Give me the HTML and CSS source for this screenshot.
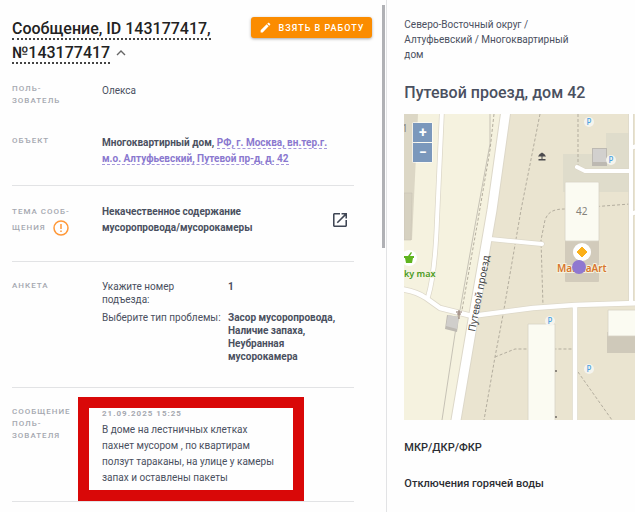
FILE: index.html
```html
<!DOCTYPE html>
<html lang="ru">
<head>
  <meta charset="UTF-8">
  <meta name="viewport" content="width=device-width, initial-scale=1.0">
  <title>Сообщение 143177417</title>
  <link rel="stylesheet" href="styles.css">
</head>
<body>
  <main class="message">
    <div class="scrollbar"></div>
    <header class="message-header">
      <h1><span class="dotted">Сообщение, ID 143177417,</span> <span class="dotted">№143177417</span>
        <svg class="caret" viewBox="0 0 10 6"><path d="M1 5l4-4 4 4" fill="none" stroke="#666" stroke-width="1.4"/></svg>
      </h1>
      <button class="take">
        <svg viewBox="0 0 24 24"><path fill="#fff" d="M3 17.200V21h3.800L17.800 9.900l-3.700-3.700zM20.700 7c.4-.4.4-1 0-1.400l-2.300-2.300c-.4-.4-1-.4-1.400 0l-1.800 1.800 3.700 3.700z"/></svg>
        Взять в работу
      </button>
    </header>

    <dl class="fields">
      <div class="row user">
        <dt>Поль&shy;зователь</dt>
        <dd>Олекса</dd>
      </div>
      <div class="row object">
        <dt>Объект</dt>
        <dd class="bold">Многоквартирный дом, <a href="#">РФ, г. Москва, вн.тер.г. м.о. Алтуфьевский, Путевой пр-д, д. 42</a></dd>
      </div>
      <div class="row theme">
        <dt>Тема сооб&shy;щения
          <svg class="warn" viewBox="0 0 16 16"><circle cx="8" cy="8" r="7" fill="none" stroke="#ff9838" stroke-width="1.500"/><path d="M8 4v5M8 10.500v1.600" stroke="#ff9838" stroke-width="1.500"/></svg>
        </dt>
        <dd class="bold">
          <span>Некачественное содержание мусоропровода/мусорокамеры</span>
          <a class="open" href="#" aria-label="Открыть">
            <svg viewBox="0 0 18 18"><path fill="#3f4654" d="M16 16H2V2h7V0H2C.9 0 0 .9 0 2v14c0 1.100.9 2 2 2h14c1.100 0 2-.9 2-2V9h-2zM11 0v2h3.600L4.800 11.800l1.400 1.400L16 3.400V7h2V0z"/></svg>
          </a>
        </dd>
      </div>
      <div class="row form">
        <dt>Анкета</dt>
        <dd>
          <dl class="answers">
            <dt>Укажите номер<br>подъезда:</dt>
            <dd>1</dd>
            <dt>Выберите тип проблемы:</dt>
            <dd>Засор мусоропровода, Наличие запаха, Неубранная мусорокамера</dd>
          </dl>
        </dd>
      </div>
      <div class="row text">
        <dt>Сообщение поль&shy;зователя</dt>
        <dd>
          <time>21.09.2025 15:25</time>
          <p>В доме на лестничных клетках пахнет мусором , по квартирам ползут тараканы, на улице у камеры запах и оставлены пакеты</p>
        </dd>
        <div class="frame"></div>
      </div>
    </dl>
  </main>

  <aside class="place">
    <nav>Северо-Восточный округ / Алтуфьевский / Многоквартирный дом</nav>
    <h2>Путевой проезд, дом 42</h2>
    <div class="map">
      <svg class="map-view" viewBox="0 0 231 306" preserveAspectRatio="xMinYMin slice">
        <rect width="231" height="306" fill="#eae4d0"/>
        <path d="M0 0H102L88 96 70 200 52 306H0z" fill="#f5f2df"/>
        <path d="M0 0H14L8 126H0z" fill="#dcd7c5"/>
        <path d="M0 79H8L7 126H0z" fill="#d6d1c0" stroke="#c9c4b5" stroke-width=".6"/>
        <path d="M202 19h23v59h-66V40h43z" fill="#dfdccb"/>

        <!-- paths -->
        <g fill="none" stroke="#b3ad9e" stroke-width="1">
          <path d="M86 0v30L72 106 56 196M54 200L38 306" stroke="#c6c2b5"/>
          <g stroke-dasharray="3 2">
            <path d="M90 0L86 36 74 106 58 196"/>
            <path d="M136 0L117 96 99 201 91 243 80 306"/>
            <path d="M91 243l20-8h58"/>
            <path d="M174 0v52"/>
            <path d="M226 90l-65 5c-12 0-17 3-20 11l-4 20 2 66"/>
            <path d="M174 258l34 48"/>
          </g>
        </g>

        <!-- roads -->
        <g fill="none" stroke="#ddd8c9" stroke-linecap="round" stroke-linejoin="round">
          <path d="M102-4L88 96 70 200 51 312" stroke-width="11"/>
          <path d="M38-4L33 106Q31 160 24 183M86 125l52 5M227-4v193M173 53l8 4h45M227 34l8-3M227 100l8-3" stroke-width="5.500"/>
          <path d="M-4 175Q12 177 22 184L36 194 68 202 129 194 171 191 235 189M171 191v120" stroke-width="6"/>
        </g>
        <g fill="none" stroke="#fff" stroke-linecap="round" stroke-linejoin="round">
          <path d="M102-4L88 96 70 200 51 312" stroke-width="9"/>
          <path d="M38-4L33 106Q31 160 24 183M86 125l52 5M227-4v193M173 53l8 4h45M227 34l8-3M227 100l8-3" stroke-width="4"/>
          <path d="M-4 175Q12 177 22 184L36 194 68 202 129 194 171 191 235 189M171 191v120" stroke-width="4.500"/>
        </g>

        <!-- buildings -->
        <path d="M188 34h15v18h-15z" fill="#bdb9b2"/>
        <path d="M189 35h13v13h-13z" fill="#d2d0ce"/>
        <path d="M43 201l12 2-2 15-12-3z" fill="#bdb9b2"/>
        <path d="M44 201l11 2-2 12-11-3z" fill="#d0cecb"/>
        <rect x="161" y="120" width="34" height="48" rx="1" fill="#d2cbbb"/>
        <rect x="161" y="68" width="34" height="59" rx="1" fill="#fbfbf2" stroke="#d8d3c5" stroke-width=".8"/>
        <path d="M124 210h27v100h-27z" fill="#fbfbf2" stroke="#d8d3c5" stroke-width=".8"/>
        <path d="M203 218h32v21h-32z" fill="#cfc9ba"/>
        <path d="M204 196h32v26h-32z" fill="#fbfbf2" stroke="#d8d3c5" stroke-width=".8"/>
        <circle cx="152" cy="257" r="1" fill="#6f6a64"/>
        <circle cx="152" cy="303" r="1" fill="#6f6a64"/>
        <path d="M55 196v9M52 198h6M53 200h4" stroke="#8b7568" stroke-width="1"/>
        <path d="M134 42.500q1-2.500 4-4 3 1.500 4 4zM137.500 42h1v4h-1zM134.500 45h7v1.500h-7z" fill="#4b4a4d"/>

        <g class="parking">
          <circle cx="185" cy="8" r="5"/><text x="185" y="11">P</text>
          <circle cx="207" cy="46" r="5"/><text x="207" y="49">P</text>
          <circle cx="146" cy="207" r="5"/><text x="146" y="210">P</text>
          <circle cx="185" cy="255" r="5"/><text x="185" y="258">P</text>
        </g>

        <text class="number" x="-2" y="18">1</text>
        <text class="number" x="172" y="101">42</text>
        <text class="street" transform="translate(71 218) rotate(-79)">Путевой проезд</text>

        <circle cx="5" cy="144" r="8" fill="#fff"/>
        <path d="M0 142h10v2H9l-1 5H2l-1-5H0zM4 142l3-4 1 .7-2 3.300z" fill="#5fb41f"/>
        <text class="shop" x="0" y="163">ky max</text>
        <text class="art" x="153" y="158">MarinaArt</text>
        <circle cx="178" cy="138" r="9" fill="#fff"/>
        <path d="M178 133l5 5-5 5-5-5z" fill="#fbb01a" stroke="#fbb01a" stroke-linejoin="round"/>
        <circle cx="175" cy="153" r="7" fill="#8f78d0"/>
      </svg>
      <div class="zoom">
        <button aria-label="Приблизить">+</button>
        <button aria-label="Отдалить">−</button>
      </div>
    </div>
    <h3>МКР/ДКР/ФКР</h3>
    <h3>Отключения горячей воды</h3>
  </aside>
</body>
</html>
```

FILE: styles.css
```css
* {
  box-sizing: border-box;
}
body {
  margin: 0;
  display: flex;
  min-height: 100vh;
  font-family: Roboto, sans-serif;
  font-size: 10px;
  line-height: 16px;
  color: #4a5060;
  background: #fefefe;
}
h1, h2, h3, p, dl, dd {
  margin: 0;
}
button {
  border: none;
  padding: 0;
  font-family: inherit;
  cursor: pointer;
}

.message {
  position: relative;
  flex: 0 0 61%;
  padding: 17px 14px 0 12px;
  border-right: 1px solid #e2e3e5;
}
.scrollbar {
  position: absolute;
  top: 5px;
  right: 1px;
  width: 3px;
  height: 243px;
  background: #b0b1b5;
}
.message-header {
  display: flex;
  justify-content: space-between;
  align-items: flex-start;
}
h1 {
  width: 210px;
  font-size: 16px;
  font-weight: 500;
  line-height: 24px;
  color: #222;
}
.dotted {
  border-bottom: 2px dotted #444;
}
.caret {
  width: 10px;
  height: 6px;
  margin-left: 2px;
  vertical-align: 2px;
}
.take {
  display: flex;
  align-items: center;
  gap: 7px;
  height: 21px;
  padding: 0 8px;
  border-radius: 3px;
  background: #fb8c00;
  box-shadow: 0 1px 3px rgba(0, 0, 0, 0.35);
  color: #fff;
  font-size: 9px;
  font-weight: 500;
  letter-spacing: 1px;
  text-transform: uppercase;
  white-space: nowrap;
}
.take svg {
  width: 13px;
  height: 13px;
}

.fields {
  margin-right: 18px;
}
.row {
  position: relative;
  display: grid;
  grid-template-columns: 60px 1fr;
  column-gap: 30px;
  padding: 18px 0;
  border-bottom: 1px solid #e2e3e5;
}
.row > dt {
  font-size: 8px;
  font-weight: 500;
  line-height: 12px;
  letter-spacing: 1px;
  text-transform: uppercase;
  color: #a5a8b0;
}
.row.user {
  padding-bottom: 10px;
  border-bottom: none;
}
.bold {
  font-weight: 700;
}
.object dd {
  max-width: 240px;
}
.row a {
  color: #8a78cf;
  text-decoration: none;
  border-bottom: 1px dashed #a596dc;
}
.row.theme {
  padding-bottom: 25px;
}
.theme > dt {
  line-height: 16px;
}
.warn {
  width: 16px;
  height: 16px;
  margin-left: 4px;
  vertical-align: middle;
}
.theme dd {
  display: flex;
  justify-content: space-between;
  align-items: center;
}
.theme dd span {
  width: 170px;
}
.row .open {
  border: none;
  margin-right: 7px;
}
.open svg {
  display: block;
  width: 14px;
  height: 14px;
}
.row.form {
  padding-bottom: 24px;
}
.row.text {
  padding-bottom: 15px;
}
.answers {
  display: grid;
  grid-template-columns: 126px 1fr;
  row-gap: 5px;
  line-height: 13px;
}
.answers dt {
  white-space: nowrap;
}
.answers dd {
  font-weight: 700;
}
.text time {
  display: block;
  font-size: 8px;
  font-weight: 700;
  letter-spacing: 1px;
  color: #a5a8b0;
}
.text p {
  max-width: 176px;
}
.frame {
  position: absolute;
  top: 9px;
  left: 66px;
  right: 50px;
  bottom: 0;
  border: 11px solid #d90808;
}

.place {
  flex: 1;
  min-width: 0;
  padding: 17px 0 0 17px;
}
.place nav {
  width: 170px;
  line-height: 15px;
}
h2 {
  margin: 21px 0 11px;
  font-size: 16px;
  font-weight: 500;
  line-height: 20px;
}
h3 {
  margin-top: 20px;
  font-size: 11px;
  font-weight: 500;
  line-height: 16px;
  color: #2b2d33;
}
.map {
  position: relative;
}
.map-view {
  display: block;
  width: 100%;
  height: 306px;
}
.zoom {
  position: absolute;
  top: 8px;
  left: 8px;
  display: grid;
  gap: 1px;
  padding: 1px;
  border-radius: 2px;
  background: rgba(255, 255, 255, 0.6);
}
.zoom button {
  width: 19px;
  height: 19px;
  background: #7b98bc;
  color: #fff;
  font-size: 14px;
  font-weight: 700;
  line-height: 19px;
}
.map-view text {
  font-family: "Noto Sans", sans-serif;
}
.parking circle {
  fill: #f5f4ee;
}
.parking text {
  font-size: 8px;
  font-weight: 500;
  text-anchor: middle;
  fill: #4da3e0;
}
.number {
  font-size: 10px;
  fill: #85827c;
}
.street {
  font-size: 10px;
  fill: #444;
}
.shop, .art {
  font-size: 9px;
  font-weight: 600;
  stroke: #f5f2df;
  stroke-width: 2px;
  paint-order: stroke;
}
.shop {
  fill: #4a9a1c;
}
.map-view .art {
  font-size: 10px;
  fill: #d8762c;
}
```
